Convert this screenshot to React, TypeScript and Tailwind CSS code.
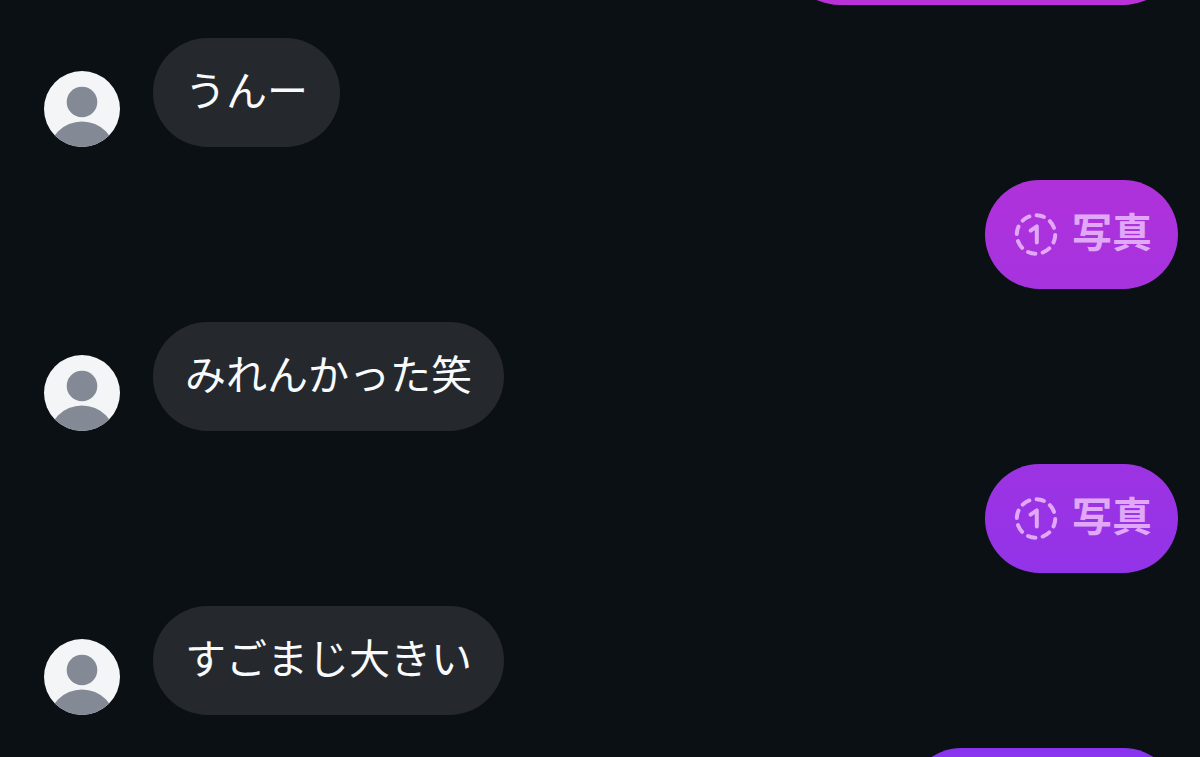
import { ReactNode } from "react"

type Message =
  | { from: "them"; text: string }
  | { from: "me"; kind: "photo"; label: string; color: string }
  | { from: "me"; kind: "blank"; color: string };

const messages: Message[] = [
  { from: "me", kind: "blank", color: "w-[393px] from-[#bf2fd4] to-[#b832d8]" },
  { from: "them", text: "うんー" },
  { from: "me", kind: "photo", label: "写真", color: "from-[#af31da] to-[#a633df]" },
  { from: "them", text: "みれんかった笑" },
  { from: "me", kind: "photo", label: "写真", color: "from-[#9d33e3] to-[#9333e8]" },
  { from: "them", text: "すごまじ大きい" },
  { from: "me", kind: "blank", color: "w-[271px] from-[#8a34ee] to-[#8035f3]" },
];

function Avatar() {
  return (
    <svg viewBox="0 0 76 76" className="size-[76px] shrink-0 rounded-full bg-[#f3f5f7]" aria-hidden="true">
      <circle cx="38" cy="31" r="15.3" fill="#838995" />
      <circle cx="38" cy="84.5" r="34" fill="#838995" />
    </svg>
  );
}

// dashed ring with a "1" inside: eight dashes, 12 units of path each
function ViewOnceIcon() {
  return (
    <svg viewBox="0 0 44 44" className="size-11 shrink-0" fill="none" stroke="currentColor" strokeWidth="4" strokeLinecap="round" strokeLinejoin="round" aria-hidden="true">
      <circle cx="22" cy="21.5" r="19.2" pathLength="96" strokeDasharray="6.2 5.8" strokeDashoffset="3.1" transform="rotate(-77 22 21.5)" />
      <path d="M16.6 17.6 L22.8 13.4 V29.6" />
    </svg>
  );
}

function Sent({ color, children }: { color: string; children?: ReactNode }) {
  return (
    <div className={`flex h-[109px] items-center self-end rounded-full bg-linear-to-b ${color}`}>
      {children}
    </div>
  );
}

function Received({ text }: { text: string }) {
  return (
    <div className="flex items-end gap-[33px]">
      <Avatar />
      <p className="h-[109px] rounded-full bg-[#25292d] px-8 pt-5 text-[41px] leading-[60px] whitespace-nowrap text-[#f8fafc]">{text}</p>
    </div>
  );
}

export default function App() {
  return (
    <main lang="ja" className="h-screen overflow-hidden bg-[#0b1014] font-['Noto_Sans_CJK_JP',sans-serif]">
      <div className="-mt-[104px] flex flex-col gap-[33px] pr-[22px] pl-11">
        {messages.map((message, index) => {
          if (message.from === "them") return <Received key={index} text={message.text} />;
          return (
            <Sent key={index} color={message.color}>
              {message.kind === "photo" && (
                <div className="flex items-center gap-3.5 pr-[26px] pl-[29px] text-[#e0a8f6]">
                  <ViewOnceIcon />
                  <span className="pb-2.5 text-[40px] leading-[60px] font-bold">{message.label}</span>
                </div>
              )}
            </Sent>
          );
        })}
      </div>
    </main>
  );
}
